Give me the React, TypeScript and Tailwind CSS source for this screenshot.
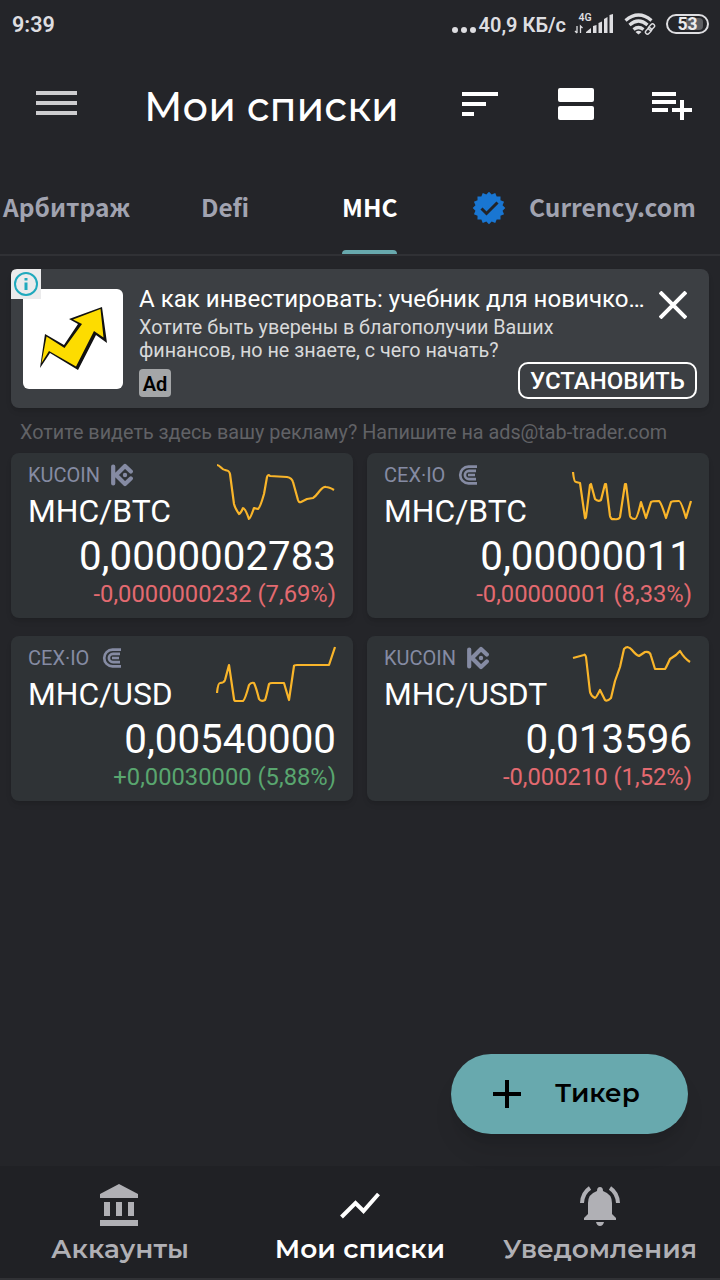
import { clsx } from "clsx";

type Exchange = "KUCOIN" | "CEX·IO";

interface Ticker {
  exchange: Exchange;
  pair: string;
  price: string;
  change: string;
  up: boolean;
  chart: string;
}

const tickers: Ticker[] = [
  {
    exchange: "KUCOIN",
    pair: "MHC/BTC",
    price: "0,0000002783",
    change: "-0,0000000232 (7,69%)",
    up: false,
    chart:
      "M1 3 C4 3 6 8 9 8 C12 9 13 8 14 12 L18 42 Q19 46 23 52 Q25 51 27 46 Q29 46 33 57 Q34 57 38 46 L42 47 Q44 46 48 32 L51 15 Q52 12 54 14 L71 15 Q76 16 77 20 L82 38 Q83 41 85 40 L91 37 L97 36 Q99 35 102 31 Q107 24 110 25 Q113 25 118 28",
  },
  {
    exchange: "CEX·IO",
    pair: "MHC/BTC",
    price: "0,00000011",
    change: "-0,00000001 (8,33%)",
    up: false,
    chart:
      "M1 10 Q2 20 4 20 L8 21 L13 56 Q13 57 14 55 L18 23 L19 22 L23 37 Q26 40 29 38 L33 22 L34 22 L38 54 Q39 58 42 57 Q47 58 48 55 L53 22 L54 22 L58 54 Q59 57 63 57 Q65 57 69 40 L74 56 L79 40 Q80 39 87 39 Q89 40 94 56 L99 40 Q100 39 107 39 Q109 39 114 56 L119 39",
  },
  {
    exchange: "CEX·IO",
    pair: "MHC/USD",
    price: "0,00540000",
    change: "+0,00030000 (5,88%)",
    up: true,
    chart:
      "M1 48 Q2 38 4 38 Q8 38 9 35 L13 20 L18 54 Q18 56 20 56 L27 56 Q29 55 33 40 Q35 37 38 38 Q40 42 43 54 Q45 57 49 55 Q50 53 53 39 Q54 38 56 38 L68 38 L73 55 L78 21 Q78 20 81 20 L113 20 L119 2",
  },
  {
    exchange: "KUCOIN",
    pair: "MHC/USDT",
    price: "0,013596",
    change: "-0,000210 (1,52%)",
    up: false,
    chart:
      "M1 13 L12 10 Q13 9 14 12 L18 47 Q19 51 23 53 Q24 53 28 45 L33 55 Q35 57 39 53 L43 36 L48 22 L52 4 Q56 0 60 5 Q64 10 67 11 L73 7 Q78 6 79 11 L83 24 L93 24 Q94 23 98 14 L104 10 L108 6 Q112 13 118 17",
  },
];

const tabLabel = "font-['Noto_Sans_CJK_SC','Noto_Sans',sans-serif] text-[24.5px] font-bold leading-9";
const display = "font-[Montserrat,Inter,sans-serif]";
const navLabel = "mt-1.5 whitespace-nowrap text-[26.4px] font-semibold leading-[33px]";

function ExchangeLogo({ exchange }: { exchange: Exchange }) {
  if (exchange === "KUCOIN") {
    return (
      <svg className="ml-[11px] h-6 w-[22px]" viewBox="0 0 22 24" fill="none">
        <path
          d="M2.200 3.500v17M3 12h2.500M5 12l9-9 5.800 5.500M5 12l9 9 5.800-5.500"
          stroke="#858ba3"
          strokeWidth="4.200"
          strokeLinecap="round"
          strokeLinejoin="round"
        />
        <circle cx="14" cy="12" r="2.200" fill="#858ba3" />
      </svg>
    );
  }
  return (
    <svg
      className="ml-3 h-6 w-[22px]"
      viewBox="0 0 22 24"
      fill="none"
      stroke="#858ba3"
      strokeWidth="2.700"
    >
      <path d="M20 3.700h-8.500a8.300 8.300 0 0 0 0 16.600H20M19 7.900h-7a4.100 4.100 0 0 0 0 8.200h7M18 12h-7" />
    </svg>
  );
}

function StatusBar() {
  return (
    <div className="flex h-12 items-center pl-3 pr-[11px] text-[#dedee1]">
      <span className="pt-0.5 text-[21.5px] font-semibold leading-6">9:39</span>
      <div className="ml-auto flex items-center">
        <div className="mr-[3px] mt-3 flex gap-[3px]">
          <i className="size-1.5 rounded-full bg-current" />
          <i className="size-1.5 rounded-full bg-current" />
          <i className="size-1.5 rounded-full bg-current" />
        </div>
        <span className="pt-0.5 text-[20px] font-semibold leading-6">40,9 КБ/с</span>
        <svg className="ml-2 h-7 w-10" viewBox="0 0 40 28" fill="currentColor">
          <text x="4.500" y="11" fontSize="10.500" fontWeight="600">
            4G
          </text>
          <path d="M12 23v-1l5-4v5zM19 16l3.500-1v8H19zM24.500 13l3.500-1.500V23h-3.500zM30 9l3.500-2v16H30zM35.500 5 39 4v19h-3.500z" />
          <path
            d="M3 16v7M1 21l2 2M6.500 23v-7l2 2"
            fill="none"
            stroke="currentColor"
            strokeWidth="1.300"
          />
        </svg>
        <svg
          className="ml-2.5 h-6 w-8"
          viewBox="0 0 32 24"
          fill="none"
          stroke="currentColor"
          strokeWidth="3.200"
        >
          <path d="M1.500 8.500q13-11 26 0M5.500 13q9-8 18 0M9.500 17.500q5-4 10 0" />
          <path d="m14.500 22.500-3-2.500q3-2.500 6 0z" fill="currentColor" stroke="none" />
          <g strokeWidth="3.500" stroke="#242529">
            <rect x="21" y="17" width="7" height="4" rx="2" transform="rotate(-45 24.500 19)" />
            <rect x="24" y="13" width="7" height="4" rx="2" transform="rotate(-45 27.500 15)" />
          </g>
          <g strokeWidth="1.400">
            <rect x="21" y="17" width="7" height="4" rx="2" transform="rotate(-45 24.500 19)" />
            <rect x="24" y="13" width="7" height="4" rx="2" transform="rotate(-45 27.500 15)" />
          </g>
        </svg>
        <div className="relative ml-2.5 flex h-5 w-[43px] items-center justify-center rounded-full border-2 border-current">
          <div className="absolute inset-y-0.5 left-[18px] w-[17px] rounded-r-sm bg-[#5c5d61]" />
          <span className="relative text-[17.5px] font-bold leading-4 text-[#ececee]">53</span>
        </div>
      </div>
    </div>
  );
}

function Header() {
  return (
    <header className="flex h-28 items-center pl-9 pr-7">
      <svg className="-mt-0.5 h-[26px] w-[41px]" viewBox="0 0 41 26" fill="#cdcdcf">
        <path d="M0 1h41v4H0zM0 11h41v4H0zM0 21h41v4H0z" />
      </svg>
      <h1
        className={clsx(
          display,
          "ml-[67px] w-[252px] whitespace-nowrap pt-1.5 text-[40px] font-medium leading-[48px] text-white"
        )}
      >
        Мои списки
      </h1>
      <svg className="ml-auto h-6 w-9" viewBox="0 0 36 24" fill="#fff">
        <path d="M0 0h36v4H0zM0 10h24v4H0zM0 20h12v4H0z" />
      </svg>
      <svg className="ml-[60px] h-8 w-9" viewBox="0 0 36 32" fill="#fff">
        <rect width="36" height="14" rx="2" />
        <rect y="18" width="36" height="14" rx="2" />
      </svg>
      <svg className="ml-[58px] mt-1 h-7 w-10" viewBox="0 0 40 28" fill="#fff">
        <path d="M0 0h24v4H0zM0 8h24v4H0zM0 16h16v4H0zM28 8h4v8h8v4h-8v8h-4v-8h-8v-4h8z" />
      </svg>
    </header>
  );
}

function VerifiedBadge() {
  const points = Array.from({ length: 32 }, (_, i) => {
    const r = i % 2 ? 13.8 : 16.3;
    const a = (i * Math.PI) / 16;
    return `${17 + r * Math.sin(a)},${17 - r * Math.cos(a)}`;
  }).join(" ");
  return (
    <svg className="ml-[75px] mt-0.5 size-[34px]" viewBox="0 0 34 34">
      <polygon points={points} fill="#1976d2" />
      <path d="m9.500 17.500 5 5 11-11" fill="none" stroke="#232428" strokeWidth="3" />
    </svg>
  );
}

function Tabs() {
  return (
    <nav className="flex h-24 items-center border-b-2 border-[#303135] pl-[3px] text-[#a1a3b0]">
      <span className={clsx(tabLabel, "w-[198px]")}>Арбитраж</span>
      <span className={clsx(tabLabel, "w-[141px]")}>Defi</span>
      <div className="flex h-full w-[55px] flex-col justify-end text-white">
        <span className={clsx(tabLabel, "mb-[25px]")}>MHC</span>
        <div className="h-1 rounded-t-sm bg-[#68a9ae]" />
      </div>
      <VerifiedBadge />
      <span className={clsx(tabLabel, "ml-[23px]")}>Currency.com</span>
    </nav>
  );
}

function AdBanner() {
  return (
    <section className="relative mx-[11px] mt-[13px] flex h-[139px] rounded-lg bg-[#3c3f43] shadow-md">
      <div className="ml-3 mt-5 size-[100px] rounded-md bg-white">
        <svg viewBox="0 0 100 100">
          <path d="m17 79 5-34 19 11 14-21-9-5 33-12 5 36-11-8-18 35-28-17z" fill="#111" />
          <path d="m18.500 74 5-26.500L41.500 59 59 35l-9-4.500L77.500 20l3 28.500L71 42 53 77.500 26 62z" fill="#fddc00" />
        </svg>
      </div>
      <div className="ml-4 mt-4 whitespace-nowrap">
        <p className="text-[24.1px] leading-7 text-white">А как инвестировать: учебник для новичко…</p>
        <p className="mt-[3px] text-[19.75px] leading-[23px] text-[#d8d9da]">
          Хотите быть уверены в благополучии Ваших
          <br />
          финансов, но не знаете, с чего начать?
        </p>
        <span className="mt-[7px] flex h-7 w-8 items-center justify-center rounded bg-[#a4a6a8] pt-px text-[20px] font-semibold text-black">
          Ad
        </span>
      </div>
      <svg className="absolute left-0 top-0 size-[30px]" viewBox="0 0 30 30">
        <path d="M6 0h24v30H0V6q0-6 6-6" fill="#ebebec" />
        <circle cx="15" cy="15" r="11" fill="none" stroke="#1fa9bd" strokeWidth="2" />
        <path d="M13.500 9h3v2.500h-3zM13.500 13.500h3V21h-3z" fill="#1fa9bd" />
      </svg>
      <svg className="absolute right-[22px] top-[22px] size-7" viewBox="0 0 28 28">
        <path d="m1 1 26 26M27 1 1 27" stroke="#fff" strokeWidth="4" />
      </svg>
      <button className="absolute bottom-[9px] right-3 h-[37px] w-[179px] rounded-[10px] border-2 border-white pt-px text-[24px] font-medium leading-8 text-white">
        УСТАНОВИТЬ
      </button>
    </section>
  );
}

function TickerCard({ ticker }: { ticker: Ticker }) {
  return (
    <article className="relative h-[165px] rounded-lg bg-[#2f3336] px-[17px] pt-2.5 shadow-md">
      <div className="flex h-6 items-center text-[20px] text-[#858ba3]">
        {ticker.exchange}
        <ExchangeLogo exchange={ticker.exchange} />
      </div>
      <h2 className="mt-1.5 text-[31.8px] leading-9 text-white">{ticker.pair}</h2>
      <p className="mt-1.5 text-right text-[40.3px] leading-[44px] text-white">{ticker.price}</p>
      <p
        className={clsx(
          "mt-px text-right text-[23.75px] leading-7",
          ticker.up ? "text-[#59a66f]" : "text-[#e36a70]"
        )}
      >
        {ticker.change}
      </p>
      <svg className="absolute right-[17px] top-[9px] h-[60px] w-[120px]" viewBox="0 0 120 60">
        <path d={ticker.chart} fill="none" stroke="#f9b52a" strokeWidth="2.200" strokeLinejoin="round" />
      </svg>
    </article>
  );
}

function BottomNav() {
  return (
    <nav className="flex h-[114px] border-b-2 border-[#303135] bg-[#202125] text-[#b0b0b5]">
      <div className="flex w-60 flex-col items-center pt-[18px]">
        <svg className="mr-0.5 h-[42px] w-[38px]" viewBox="0 0 38 42" fill="currentColor">
          <path d="M0 10 19 0l19 10v4H0zM4 18h6v14H4zM16 18h6v14h-6zM28 18h6v14h-6zM0 36h38v6H0z" />
        </svg>
        <span className={clsx(display, navLabel)}>Аккаунты</span>
      </div>
      <div className="flex w-60 flex-col items-center pt-[18px] text-white">
        <svg className="h-[42px] w-10" viewBox="0 0 40 42" fill="none">
          <path d="m1.500 33 14-14 8 8L38.500 10" stroke="currentColor" strokeWidth="4" />
        </svg>
        <span className={clsx(display, navLabel)}>Мои списки</span>
      </div>
      <div className="flex w-60 flex-col items-center pt-[18px]">
        <svg className="h-[42px] w-10" viewBox="0 0 40 42" fill="currentColor">
          <path d="M16 38h8q-1 4-4 4t-4-4zM20 3q3 0 3 4 9 3 9 12v11l4 4v2H4v-2l4-4V19q0-9 9-12 0-4 3-4z" />
          <path
            d="M2 19Q2.500 9 10 4M38 19Q37.500 9 30 4"
            fill="none"
            stroke="currentColor"
            strokeWidth="4"
          />
        </svg>
        <span className={clsx(display, navLabel)}>Уведомления</span>
      </div>
    </nav>
  );
}

export default function App() {
  return (
    <div className="relative flex h-[1280px] w-[720px] flex-col overflow-hidden bg-[#242529] font-[Roboto,sans-serif]">
      <StatusBar />
      <Header />
      <Tabs />
      <AdBanner />
      <p className="ml-5 mt-[11px] whitespace-nowrap text-[19.8px] leading-7 text-[#616266]">
        Хотите видеть здесь вашу рекламу? Напишите на ads@tab-trader.com
      </p>
      <main className="mx-[11px] mt-1.5 grid grid-cols-2 gap-x-3.5 gap-y-[18px]">
        {tickers.map((ticker) => (
          <TickerCard key={ticker.exchange + ticker.pair} ticker={ticker} />
        ))}
      </main>
      <button className="absolute bottom-[146px] right-8 flex h-20 w-[237px] items-center rounded-full bg-[#68a9ae] pl-[42px] text-black shadow-xl">
        <svg className="size-7" viewBox="0 0 28 28">
          <path d="M14 0v28M0 14h28" stroke="currentColor" strokeWidth="4" />
        </svg>
        <span className={clsx(display, "ml-[34px] text-[26.2px] font-semibold")}>Тикер</span>
      </button>
      <div className="mt-auto">
        <BottomNav />
      </div>
    </div>
  );
}
